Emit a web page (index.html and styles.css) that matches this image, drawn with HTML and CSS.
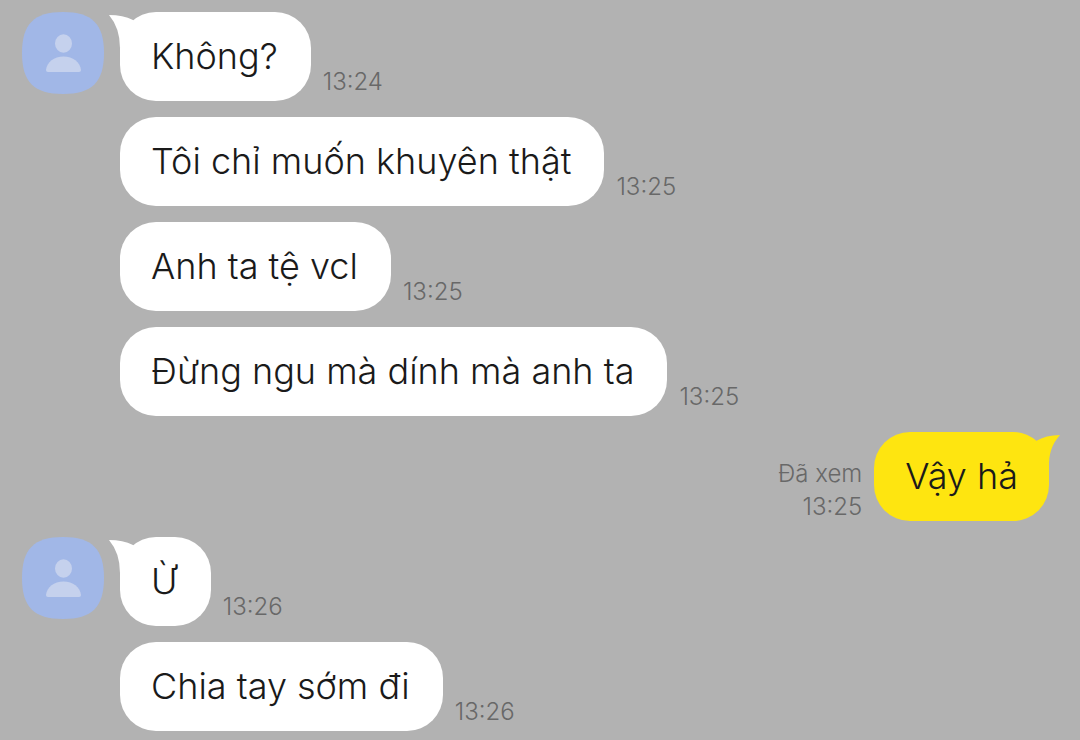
FILE: index.html
```html
<!DOCTYPE html>
<html lang="vi">
<head>
<meta charset="utf-8">
<meta name="viewport" content="width=device-width, initial-scale=1">
<title>Chat</title>
<link rel="stylesheet" href="styles.css">
</head>
<body>
<main class="chat">
  <section class="group">
    <svg class="avatar" viewBox="0 0 82 82" aria-hidden="true"><path class="avatar-bg" d="M41 0C70 0 82 12 82 41S70 82 41 82 0 70 0 41 12 0 41 0Z"/><ellipse class="avatar-person" cx="41.500" cy="31.500" rx="8.500" ry="9.200"/><path class="avatar-person" d="M24 58C25 50 32 44.500 41.500 44.500S58 50 59 58Q59 60 57 60H26Q24 60 24 58Z"/></svg>
    <div class="messages">
      <div class="message"><p class="bubble">Không?<svg class="tail" viewBox="0 0 32 36" aria-hidden="true"><path d="M-1 3Q13 3 23 8L32 16 10 36Q10 16 -1 3Z"/></svg></p><time class="meta">13:24</time></div>
      <div class="message"><p class="bubble">Tôi chỉ muốn khuyên thật</p><time class="meta">13:25</time></div>
      <div class="message"><p class="bubble">Anh ta tệ vcl</p><time class="meta">13:25</time></div>
      <div class="message"><p class="bubble">Đừng ngu mà dính mà anh ta</p><time class="meta">13:25</time></div>
    </div>
  </section>
  <section class="group sent">
    <div class="message"><div class="meta seen"><span>Đã xem</span><time>13:25</time></div><p class="bubble">Vậy hả<svg class="tail" viewBox="0 0 32 36" aria-hidden="true"><path d="M33 3Q19 3 9 9L0 16 22 36Q21 16 33 3Z"/></svg></p></div>
  </section>
  <section class="group">
    <svg class="avatar" viewBox="0 0 82 82" aria-hidden="true"><path class="avatar-bg" d="M41 0C70 0 82 12 82 41S70 82 41 82 0 70 0 41 12 0 41 0Z"/><ellipse class="avatar-person" cx="41.500" cy="31.500" rx="8.500" ry="9.200"/><path class="avatar-person" d="M24 58C25 50 32 44.500 41.500 44.500S58 50 59 58Q59 60 57 60H26Q24 60 24 58Z"/></svg>
    <div class="messages">
      <div class="message"><p class="bubble">Ừ<svg class="tail" viewBox="0 0 32 36" aria-hidden="true"><path d="M-1 3Q13 3 23 8L32 16 10 36Q10 16 -1 3Z"/></svg></p><time class="meta">13:26</time></div>
      <div class="message"><p class="bubble">Chia tay sớm đi</p><time class="meta">13:26</time></div>
    </div>
  </section>
</main>
</body>
</html>
```
FILE: styles.css
```css
* { box-sizing: border-box; }
body { margin: 0; background: #b2b2b2; color: #1a1a1a; font-family: Inter, sans-serif; font-weight: 300; }
.chat { display: flex; flex-direction: column; gap: 16px; padding: 12px 31px 9px 22px; }
.group { display: flex; align-items: flex-start; gap: 16px; }
.messages { display: flex; flex-direction: column; gap: 16px; }
.message { display: flex; align-items: flex-end; gap: 12px; }
.bubble { position: relative; margin: 0; padding: 20px 33px 20px 31px; border-radius: 36px; background: #fff; font-size: 36px; line-height: 49px; }
.avatar { width: 82px; height: 82px; flex: none; }
.avatar-bg { fill: #a1b7e7; }
.avatar-person { fill: #c5d1ed; }
.meta { padding-bottom: 3px; color: #686868; font-size: 24px; line-height: 33px; }
.sent { justify-content: flex-end; }
.sent .bubble { padding: 20px 31px; background: #fee510; }
.seen { display: flex; flex-direction: column; align-items: flex-end; margin-bottom: -2px; padding-bottom: 0; }
.tail { position: absolute; top: 0; left: -10px; width: 32px; height: 36px; overflow: visible; fill: #fff; }
.sent .tail { left: auto; right: -10px; fill: #fee510; }
```
